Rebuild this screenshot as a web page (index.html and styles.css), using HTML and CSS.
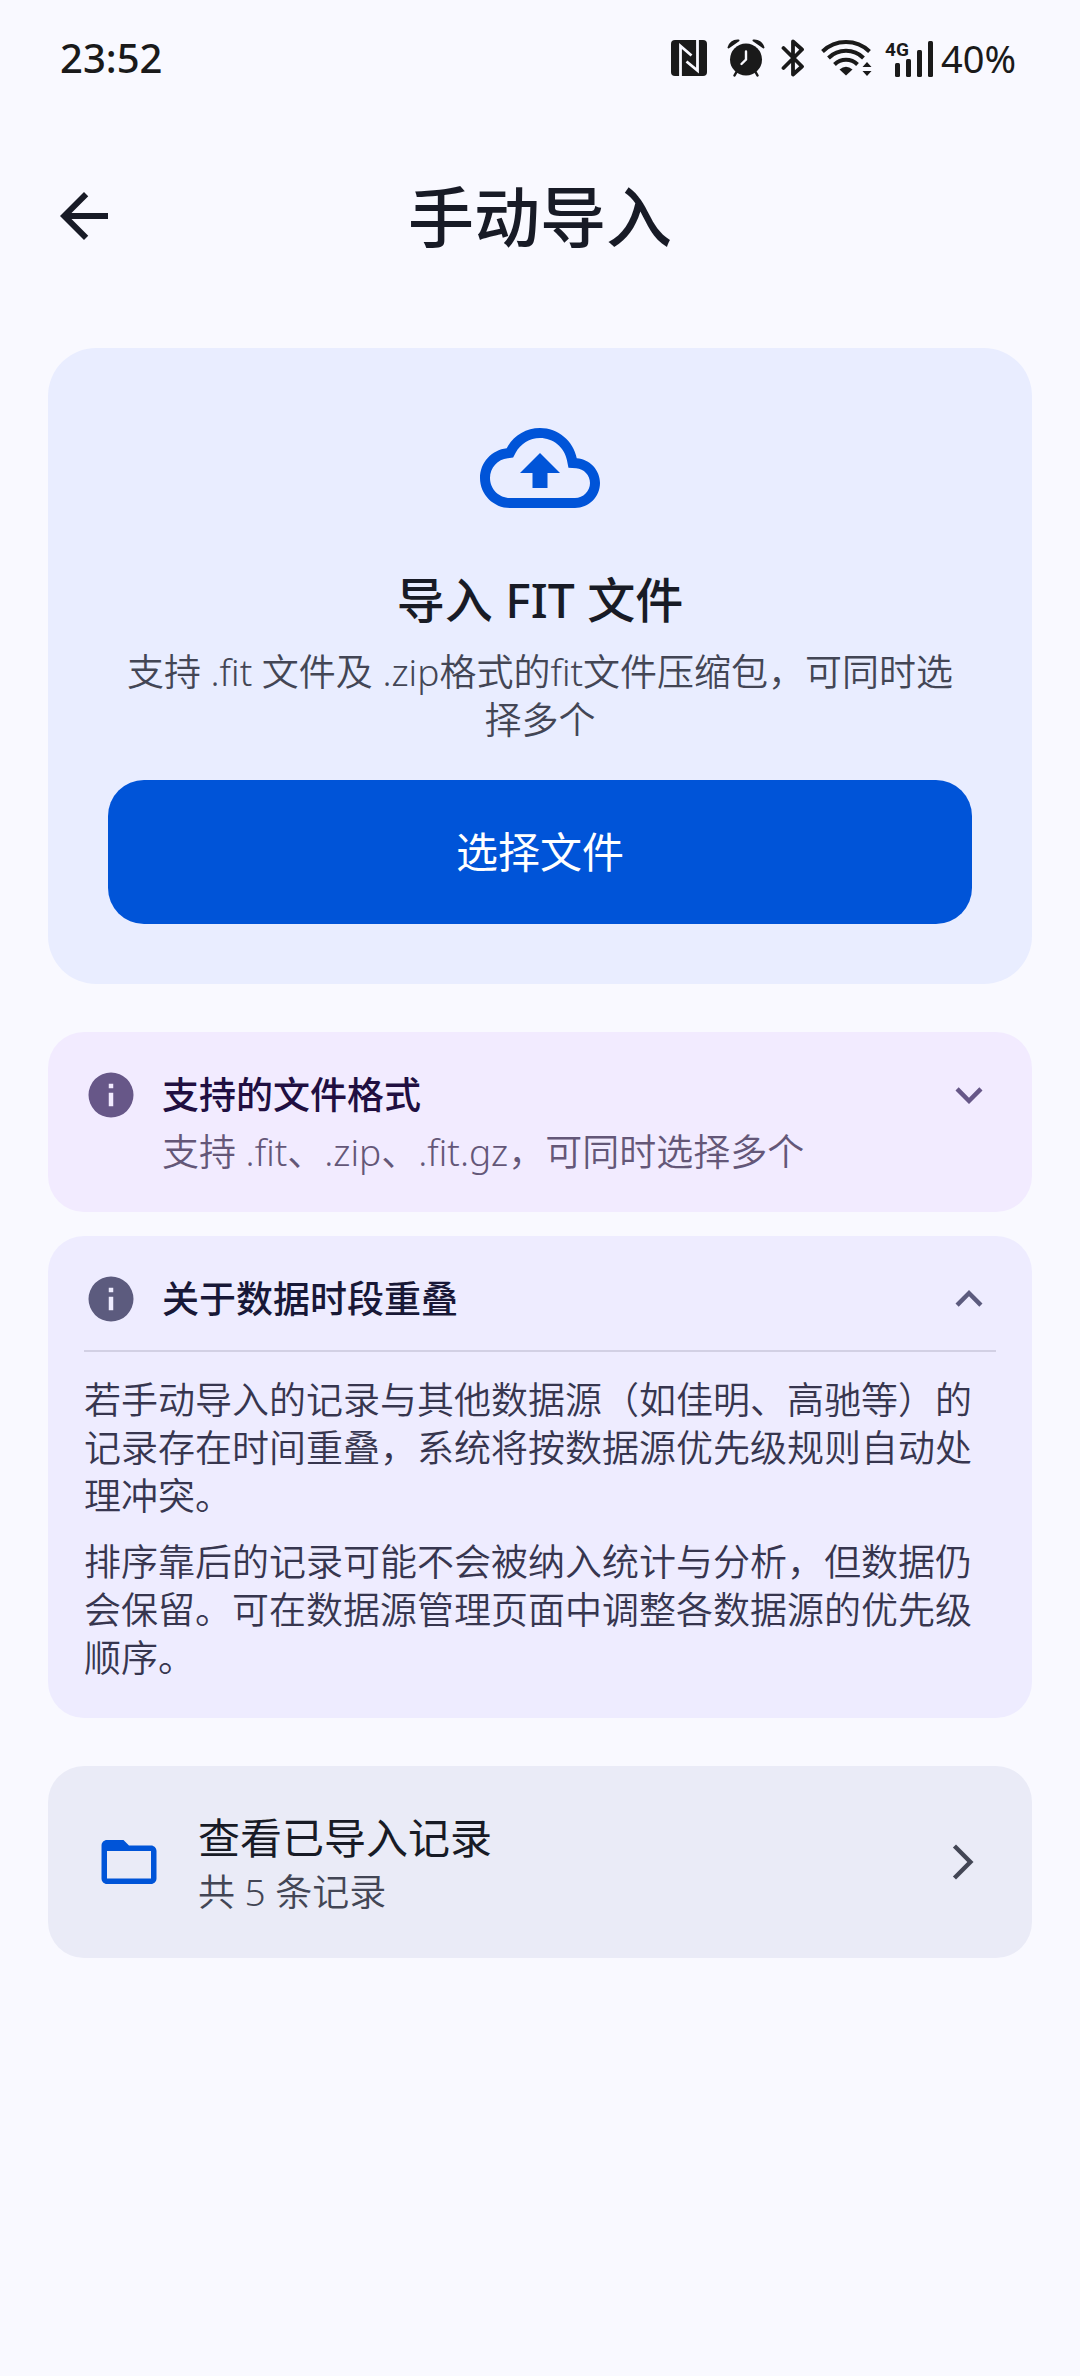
FILE: index.html
```html
<!DOCTYPE html>
<html lang="zh-CN">

<head>
    <meta charset="UTF-8">
    <meta name="viewport" content="width=device-width, initial-scale=1.0">
    <title>手动导入</title>
    <link rel="stylesheet" href="styles.css">
</head>

<body>

    <!-- 状态栏 -->
    <div class="status-bar">
        <span class="clock">23:52</span>
        <div class="status-icons">
            <!-- NFC -->
            <svg class="nfc" width="36" height="36" viewBox="0 0 36 36">
                <rect width="36" height="36" rx="4" fill="#1a1a1a"/>
                <path d="M9.500 36V6L20.500 15.500M26.500 0V30.500L15.500 21.500" fill="none" stroke="#f9f9ff" stroke-width="2.800"/>
            </svg>
            <!-- 闹钟 -->
            <svg class="alarm" width="38" height="38" viewBox="0 0 38 38">
                <circle cx="19" cy="20.500" r="16" fill="#1a1a1a"/>
                <path d="M1.500 8.500Q4 1 11.500 1.500zM36.500 8.500Q34 1 26.500 1.500z" fill="#1a1a1a" stroke="#1a1a1a" stroke-width="2" stroke-linejoin="round"/>
                <path d="M10 32L7.500 36.500M28 32L30.500 36.500" stroke="#1a1a1a" stroke-width="2.500" stroke-linecap="round"/>
                <path d="M19 12.500V20.500L14.500 25" fill="none" stroke="#f9f9ff" stroke-width="2.400" stroke-linecap="round"/>
            </svg>
            <!-- 蓝牙 -->
            <svg class="bluetooth" width="24" height="38" viewBox="0 0 24 38">
                <path d="M2.500 9L21 27.500L12 35.500V2.500L21 10.500L2.500 29" fill="none" stroke="#1a1a1a" stroke-width="3.800" stroke-linecap="round" stroke-linejoin="round"/>
            </svg>
            <!-- WLAN -->
            <svg class="wifi" width="52" height="38" viewBox="0 0 52 38">
                <g fill="none" stroke="#1a1a1a" stroke-width="4">
                    <path d="M1.500 12.500A34 34 0 0 1 48.500 12.500"/>
                    <path d="M7.500 19A25 25 0 0 1 42.500 19"/>
                    <path d="M13.500 25.500A16.500 16.500 0 0 1 36.500 25.500"/>
                </g>
                <path d="M18.500 30.500Q25 25 31.500 30.500L25 36.500z" fill="#1a1a1a"/>
                <path d="M41.500 28L46 23L50.500 28zM41.500 32L46 37L50.500 32z" fill="#1a1a1a"/>
            </svg>
            <!-- 移动网络 -->
            <svg class="signal" width="50" height="38" viewBox="0 0 50 38">
                <text class="network" x="0" y="17">4G</text>
                <g fill="#1a1a1a">
                    <rect x="10" y="24" width="5" height="14" rx="1.500"/>
                    <rect x="21" y="20" width="5" height="18" rx="1.500"/>
                    <rect x="32" y="11" width="5" height="27" rx="1.500"/>
                    <rect x="43" y="2" width="5" height="36" rx="1.500"/>
                </g>
            </svg>
            <span class="battery">40%</span>
        </div>
    </div>

    <!-- 标题栏 -->
    <header class="app-bar">
        <button class="btn-back" aria-label="返回">
            <svg width="72" height="72" viewBox="0 0 24 24" fill="currentColor">
                <path d="M20 11H7.830l5.590-5.590L12 4l-8 8 8 8 1.410-1.410L7.830 13H20z"/>
            </svg>
        </button>
        <h1>手动导入</h1>
    </header>

    <main class="content">

        <!-- 导入 -->
        <section class="card upload">
            <svg width="120" height="120" viewBox="0 0 24 24" fill="currentColor">
                <path d="M19.350 10.040C18.670 6.590 15.640 4 12 4 9.110 4 6.600 5.640 5.350 8.040 2.340 8.360 0 10.910 0 14c0 3.310 2.690 6 6 6h13c2.760 0 5-2.240 5-5 0-2.640-2.050-4.780-4.650-4.960zM19 18H6c-2.210 0-4-1.790-4-4 0-2.050 1.530-3.760 3.560-3.970l1.070-.110.500-.950C8.080 7.140 9.940 6 12 6c2.620 0 4.880 1.860 5.390 4.430l.300 1.500 1.530.110c1.560.100 2.780 1.410 2.780 2.960 0 1.650-1.350 3-3 3zM8 13h2.500v3h3v-3H16l-4-4z"/>
            </svg>
            <h2>导入 FIT 文件</h2>
            <p>支持 .fit 文件及 .zip格式的fit文件压缩包，可同时选择多个</p>
            <button class="btn-select">选择文件</button>
        </section>

        <!-- 说明 -->
        <div class="notes">
            <section class="card note formats">
                <button class="note-header" aria-expanded="false">
                    <svg width="54" height="54" viewBox="0 0 24 24" fill="currentColor">
                        <path d="M12 2a10 10 0 1 0 0 20 10 10 0 0 0 0-20zm1 15h-2v-6h2zm0-8h-2V7h2z"/>
                    </svg>
                    <span>支持的文件格式</span>
                    <svg width="54" height="54" viewBox="0 0 24 24" fill="currentColor">
                        <path d="M16.590 8.590L12 13.170 7.410 8.590 6 10l6 6 6-6z"/>
                    </svg>
                </button>
                <p class="note-summary">支持 .fit、.zip、.fit.gz，可同时选择多个</p>
            </section>

            <section class="card note overlap">
                <button class="note-header" aria-expanded="true" aria-controls="overlapBody">
                    <svg width="54" height="54" viewBox="0 0 24 24" fill="currentColor">
                        <path d="M12 2a10 10 0 1 0 0 20 10 10 0 0 0 0-20zm1 15h-2v-6h2zm0-8h-2V7h2z"/>
                    </svg>
                    <span>关于数据时段重叠</span>
                    <svg width="54" height="54" viewBox="0 0 24 24" fill="currentColor">
                        <path d="M12 8l-6 6 1.410 1.410L12 10.830l4.590 4.580L18 14z"/>
                    </svg>
                </button>
                <div class="note-body" id="overlapBody">
                    <p>若手动导入的记录与其他数据源（如佳明、高驰等）的记录存在时间重叠，系统将按数据源优先级规则自动处理冲突。</p>
                    <p>排序靠后的记录可能不会被纳入统计与分析，但数据仍会保留。可在数据源管理页面中调整各数据源的优先级顺序。</p>
                </div>
            </section>
        </div>

        <!-- 已导入记录 -->
        <a class="card records" href="#">
            <svg class="folder" width="66" height="66" viewBox="0 0 24 24" fill="currentColor">
                <path d="M20 6h-8l-2-2H4c-1.100 0-1.990.900-1.990 2L2 18c0 1.100.900 2 2 2h16c1.100 0 2-.900 2-2V8c0-1.100-.900-2-2-2zm0 12H4V8h16z"/>
            </svg>
            <span class="records-text">
                <strong>查看已导入记录</strong>
                <small>共 5 条记录</small>
            </span>
            <svg width="42" height="42" viewBox="0 0 24 24" fill="currentColor">
                <path d="M6.230 20.230L8 22l10-10L8 2 6.230 3.770 14.460 12z"/>
            </svg>
        </a>

    </main>
</body>

</html>
```
FILE: styles.css
```css
* {
    box-sizing: border-box;
}

body {
    margin: 0;
    min-height: 100vh;
    font-family: "Noto Sans", "Noto Sans CJK SC", sans-serif;
    font-size: 37px;
    line-height: 48px;
    font-weight: 350;
    background-color: #f9f9ff;
    color: #181b26;
}

h1, h2, p {
    margin: 0;
}

button {
    margin: 0;
    padding: 0;
    border: none;
    background: none;
    color: inherit;
    font: inherit;
    cursor: pointer;
}

svg {
    display: block;
    flex-shrink: 0;
}

/* 状态栏 */
.status-bar {
    display: flex;
    align-items: center;
    justify-content: space-between;
    height: 120px;
    padding: 0 64px 4px 60px;
    font-size: 40px;
    color: #1a1a1a;
}

.clock {
    font-weight: 500;
}

.status-icons {
    display: flex;
    align-items: center;
}

.nfc {
    margin-right: 20px;
}

.alarm {
    margin-right: 16px;
}

.bluetooth {
    margin-right: 16px;
}

.wifi {
    margin-right: 12px;
}

.signal {
    margin-right: 6px;
    overflow: visible;
}

.network {
    font-family: Roboto, sans-serif;
    font-size: 19px;
    font-weight: 700;
    fill: #1a1a1a;
}

.battery {
    font-size: 38px;
    font-weight: 400;
}

/* 标题栏 */
.app-bar {
    display: grid;
    grid-template-columns: 72px 1fr 72px;
    align-items: center;
    height: 192px;
    padding: 0 48px;
}

.app-bar h1 {
    font-size: 66px;
    line-height: 84px;
    font-weight: 500;
    text-align: center;
}

.content {
    display: flex;
    flex-direction: column;
    gap: 48px;
    padding: 36px 48px;
}

.card {
    border-radius: 36px;
}

.upload {
    display: flex;
    flex-direction: column;
    align-items: center;
    padding: 60px;
    border-radius: 48px;
    background-color: #e9edff;
    text-align: center;
}

.upload svg {
    color: #0054d8;
}

.upload h2 {
    margin: 36px 0 12px;
    font-size: 48px;
    line-height: 72px;
    font-weight: 500;
}

.upload p {
    padding: 0 12px;
    color: #434655;
}

.btn-select {
    width: 100%;
    height: 144px;
    margin-top: 36px;
    border-radius: 36px;
    background-color: #0054d8;
    color: #fff;
    font-size: 42px;
    font-weight: 400;
}

/* 可折叠说明 */
.notes {
    display: flex;
    flex-direction: column;
    gap: 24px;
}

.note {
    padding: 36px;
}

.note-header {
    display: flex;
    align-items: center;
    gap: 24px;
    width: 100%;
    text-align: left;
    font-weight: 500;
}

.note-header span {
    flex: 1;
}

.formats {
    background-color: #f2ebff;
}

.formats svg {
    color: #675788;
}

.formats span {
    color: #210f41;
}

.note-summary {
    margin-top: 6px;
    padding-left: 78px;
    color: #645778;
}

.overlap {
    background-color: #eeecff;
}

.overlap svg {
    color: #5c5b7e;
}

.overlap span {
    color: #181837;
}

.note-body {
    display: flex;
    flex-direction: column;
    gap: 18px;
    margin-top: 24px;
    padding-top: 24px;
    border-top: 2px solid #d2d0e4;
    color: #37364f;
}

/* 已导入记录 */
.records {
    display: flex;
    align-items: center;
    gap: 36px;
    padding: 42px 48px;
    background-color: #eaebf7;
    color: #434655;
    text-decoration: none;
}

.records .folder {
    color: #0054d8;
}

.records-text {
    display: flex;
    flex-direction: column;
    flex: 1;
}

.records-text strong {
    font-size: 42px;
    line-height: 60px;
    font-weight: 400;
    color: #181b26;
}

.records-text small {
    font-size: 37px;
}
```
